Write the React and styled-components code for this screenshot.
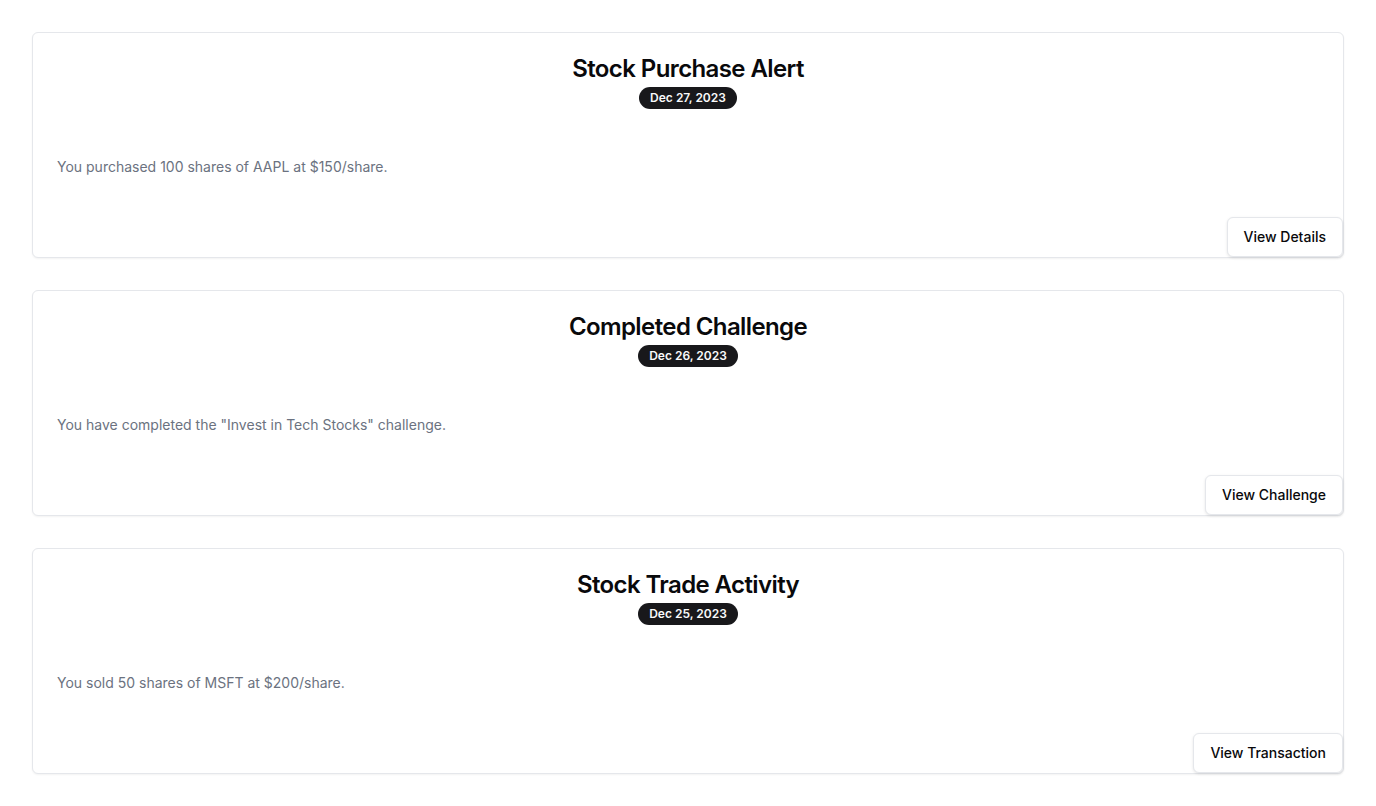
import React from 'react';
import styled, { createGlobalStyle } from 'styled-components';

const GlobalStyle = createGlobalStyle`
  * { box-sizing: border-box; }
  body {
    margin: 0;
    background: #ffffff;
    font-family: Inter, "Noto Sans", sans-serif;
    color: #09090b;
  }
`;

// Page wrapper with stacked cards
const Page = styled.div`
  padding: 32px;
  display: flex;
  flex-direction: column;
  gap: 32px;
`;

const Card = styled.div`
  border: 1px solid #e5e7eb;
  border-radius: 6px;
  background: #fff;
  box-shadow: 0 1px 2px rgba(0, 0, 0, 0.05);
  display: flex;
  flex-direction: column;
`;

const Header = styled.div`
  padding: 24px 24px 0;
  display: flex;
  flex-direction: column;
  align-items: center;
  gap: 6px;
`;

const Title = styled.h2`
  margin: 0;
  font-size: 24px;
  line-height: 24px;
  font-weight: 600;
  letter-spacing: -0.6px;
  color: #09090b;
`;

const Badge = styled.span`
  display: inline-flex;
  align-items: center;
  border-radius: 9999px;
  background: #18181b;
  color: #fafafa;
  font-size: 12px;
  font-weight: 600;
  line-height: 16px;
  padding: 3px 11px;
`;

const Content = styled.div`
  padding: 48px 24px 0;
`;

const Message = styled.p`
  margin: 0;
  font-size: 14px;
  line-height: 20px;
  color: #6b7280;
`;

const Footer = styled.div`
  display: flex;
  justify-content: flex-end;
  margin-top: 40px;
`;

const Button = styled.button`
  height: 40px;
  padding: 0 16px 2px;
  border: 1px solid #e5e7eb;
  border-radius: 6px;
  background: #fff;
  box-shadow: 0 1px 3px rgba(0, 0, 0, 0.1);
  font-family: inherit;
  font-size: 14px;
  font-weight: 500;
  color: #09090b;
  cursor: pointer;
`;

const notifications = [
  {
    title: 'Stock Purchase Alert',
    date: 'Dec 27, 2023',
    message: 'You purchased 100 shares of AAPL at $150/share.',
    action: 'View Details',
  },
  {
    title: 'Completed Challenge',
    date: 'Dec 26, 2023',
    message: 'You have completed the "Invest in Tech Stocks" challenge.',
    action: 'View Challenge',
  },
  {
    title: 'Stock Trade Activity',
    date: 'Dec 25, 2023',
    message: 'You sold 50 shares of MSFT at $200/share.',
    action: 'View Transaction',
  },
];

const App = () => {
  return (
    <>
      <GlobalStyle />
      <Page>
        {notifications.map((n, index) => (
          <Card key={index}>
            <Header>
              <Title>{n.title}</Title>
              <Badge>{n.date}</Badge>
            </Header>
            <Content>
              <Message>{n.message}</Message>
            </Content>
            <Footer>
              <Button>{n.action}</Button>
            </Footer>
          </Card>
        ))}
      </Page>
    </>
  );
};

export default App;
